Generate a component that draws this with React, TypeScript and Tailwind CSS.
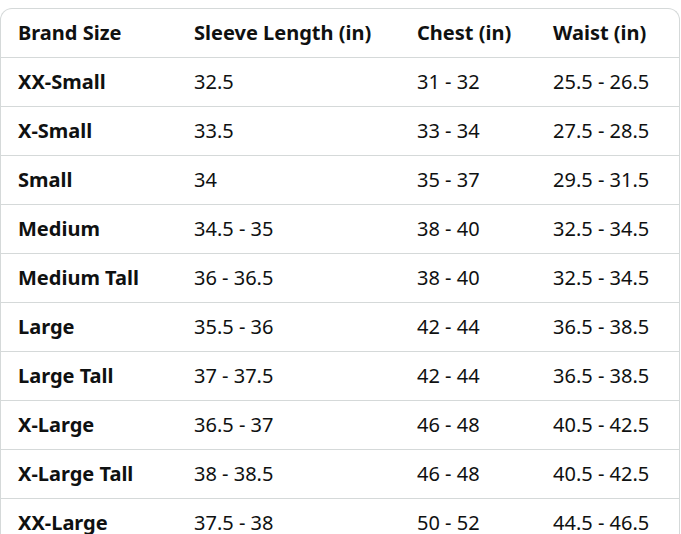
const HEADERS = ['Brand Size', 'Sleeve Length (in)', 'Chest (in)', 'Waist (in)']

const ROWS: string[][] = [
  ['XX-Small', '32.5', '31 - 32', '25.5 - 26.5'],
  ['X-Small', '33.5', '33 - 34', '27.5 - 28.5'],
  ['Small', '34', '35 - 37', '29.5 - 31.5'],
  ['Medium', '34.5 - 35', '38 - 40', '32.5 - 34.5'],
  ['Medium Tall', '36 - 36.5', '38 - 40', '32.5 - 34.5'],
  ['Large', '35.5 - 36', '42 - 44', '36.5 - 38.5'],
  ['Large Tall', '37 - 37.5', '42 - 44', '36.5 - 38.5'],
  ['X-Large', '36.5 - 37', '46 - 48', '40.5 - 42.5'],
  ['X-Large Tall', '38 - 38.5', '46 - 48', '40.5 - 42.5'],
  ['XX-Large', '37.5 - 38', '50 - 52', '44.5 - 46.5'],
]

const grid = 'grid grid-cols-[176px_223px_136px_1fr] items-center pl-[17px]'

export default function App() {
  return (
    <div className="h-[534px] w-[681px] overflow-hidden bg-white pt-[8px] font-['Noto_Sans',sans-serif] text-[20px] leading-[24px] text-[#0f1111]">
      <div className="w-[680px] rounded-t-xl border border-b-0 border-[#d5d9d9]">
        {/* En-tête */}
        <div className={`${grid} h-[48px] font-bold`}>
          {HEADERS.map((h) => (
            <span key={h}>{h}</span>
          ))}
        </div>

        {/* Lignes */}
        {ROWS.map((r) => (
          <div key={r[0]} className={`${grid} h-[49px] border-t border-[#d5d9d9]`}>
            <span className="font-bold">{r[0]}</span>
            <span>{r[1]}</span>
            <span>{r[2]}</span>
            <span>{r[3]}</span>
          </div>
        ))}
      </div>
    </div>
  )
}
